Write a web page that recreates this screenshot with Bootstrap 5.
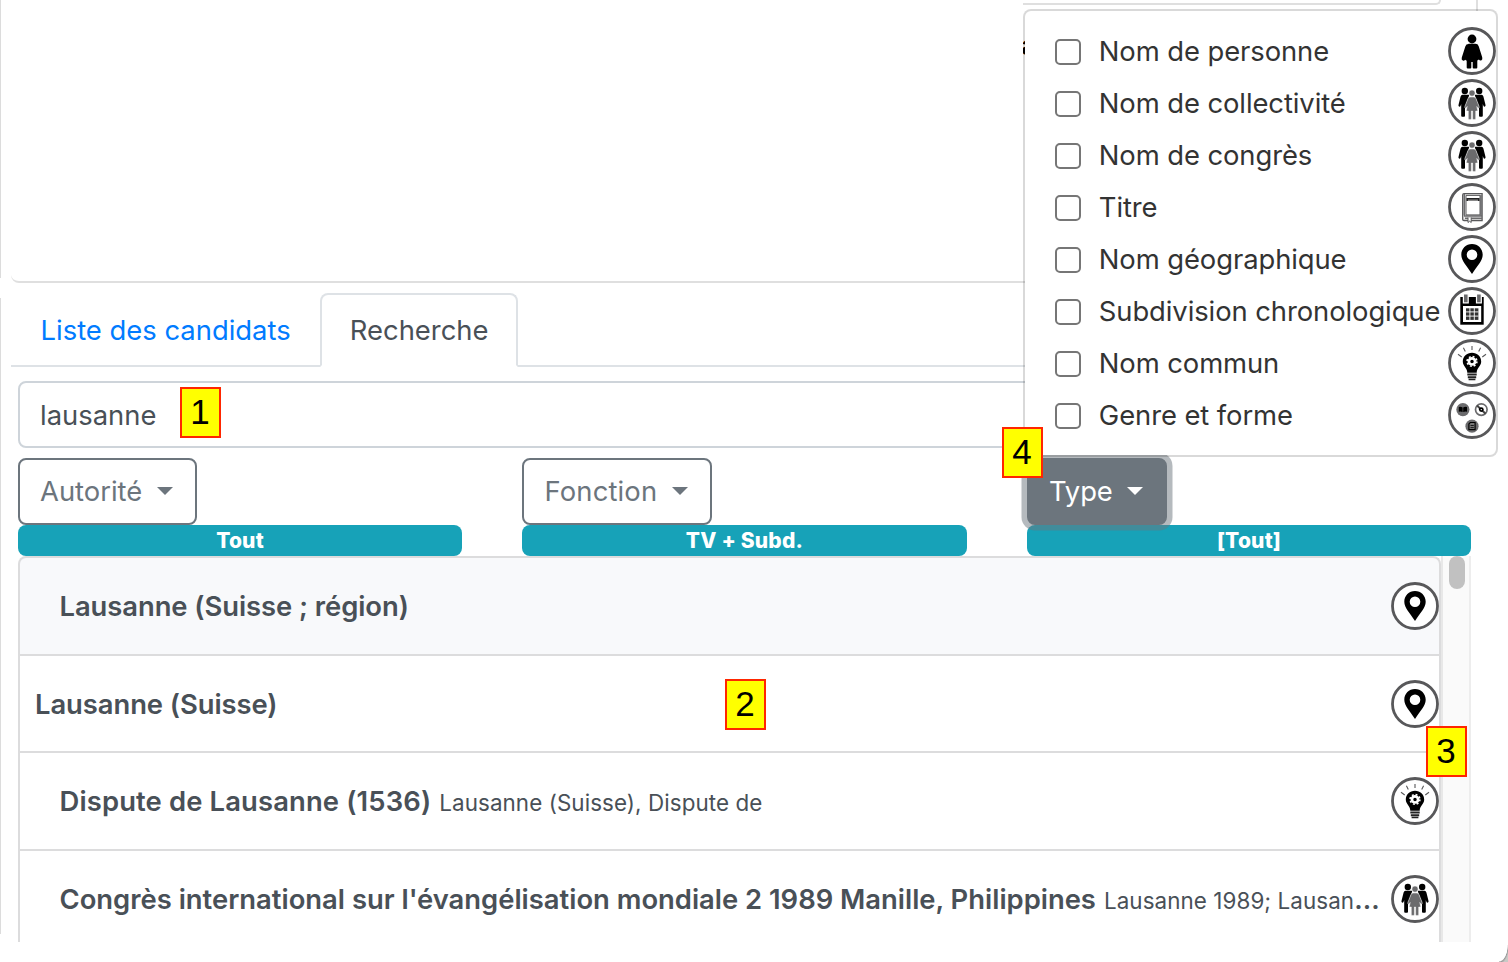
<!DOCTYPE html>
<html lang="fr">
<head>
<meta charset="utf-8">
<title>Recherche d'autorités</title>
<link href="https://cdn.jsdelivr.net/npm/bootstrap@5.3.0/dist/css/bootstrap.min.css" rel="stylesheet">
<style>
body{font-family:Inter,"Liberation Sans",sans-serif;font-size:27.4px;line-height:42px;color:#495057;background:#fff;width:1508px;height:962px;overflow:hidden;position:relative}
.upper{height:283px;margin-left:11px;width:1467px;border-bottom:2px solid #dfdfdf;border-bottom-left-radius:8px;position:relative}
.upper-right{width:455px;height:283px;border-right:2px solid #dfdfdf}
.upper-field{width:418px;height:5px;border:2px solid #dfdfdf;border-top:0;border-left:0;border-bottom-right-radius:8px}
.cut-label{width:2px;height:30px;overflow:hidden;margin-top:25px;color:#000;line-height:30px;text-indent:-2px;font-weight:600}
.edge{position:absolute;left:0;width:1px;background:#dcdcdc}
.main-tabs{margin:10px 0 0 11px;width:1460px;height:74px;border-bottom:2px solid #dee2e6;--bs-nav-tabs-border-width:2px;--bs-nav-tabs-border-radius:8px;--bs-nav-link-color:#007bff;--bs-nav-tabs-link-active-color:#495057;--bs-nav-link-padding-x:27.6px;--bs-nav-link-padding-y:14px}
.main-tabs .nav-link{height:74px;line-height:42px;white-space:nowrap}
.work{margin-left:18px;width:1453px}
.search{height:67px;margin-top:14px;border:2px solid #ced4da;border-radius:8px;padding:0 20px;color:#495057}
.filters{display:grid;grid-template-columns:444px 445px 444px;column-gap:60px;margin-top:10px}
.filters .btn{display:inline-flex;align-items:center;height:67px;border:2px solid #6c757d;border-radius:8px;font-size:27.4px;padding:0 22px 0 20px;color:#6c757d}
.filters .btn.wide{letter-spacing:.15px;padding-left:20.5px}
.filters .btn::after{margin-left:14.5px;border-top-width:8.5px;border-left-width:8px;border-right-width:8px;margin-top:-1px}
.filters .btn.type-on{background:#6c757d;color:#fff;letter-spacing:-.1px;box-shadow:0 0 0 5.5px rgba(108,117,125,.5);position:relative;z-index:2}
.filters .badge{display:block;height:31px;border-radius:8px;background:#17a2b8;font-size:21px;line-height:31px;padding:0;font-weight:800;letter-spacing:.2px}
.results{height:386px;overflow:hidden}
.results .list-group{width:1423px;flex:none;--bs-list-group-border-width:2px;--bs-list-group-border-color:#dcdcdd;--bs-list-group-border-radius:8px;--bs-list-group-color:#495057}
.results .list-group-item{height:97.6px;flex:none;padding:0 0 0 39.5px;display:flex;align-items:center;border-bottom-width:0}
.results .list-group-item:first-child{background:#f8f9fb;height:98px}
.results .list-group-item.top-hit{height:97px}
.results .list-group-item:nth-child(3){height:98px}
.results .list-group-item + .list-group-item{border-top-width:2px}
.results .list-group-item.top-hit{padding-left:15px}
.results .list-group-item:last-child{border-radius:0}
.term{font-weight:600;white-space:nowrap;flex:none}
.term.snug{letter-spacing:-.06px}
.term.loose{letter-spacing:.14px}
.alt{font-size:22.4px;white-space:nowrap;margin-left:8px;padding-top:4px;letter-spacing:.08px}
.dots{font-size:26.5px;font-weight:600;line-height:1}
.ico{width:48px;height:48px;flex:none;display:block}
.results .ico{margin-left:auto}
.track{width:30px;border-left:2px solid #e8e8e8;border-right:2px solid #ededed;background:#fafafa;padding:0 6px}
.thumb{width:16px;height:33px;border-radius:8px;background:#c1c1c1}
.type-menu{display:block;left:1023px;top:9px;width:475px;height:448px;border:2px solid rgba(0,0,0,.15);border-radius:8px;padding:14px 0;background:#fff;background-clip:padding-box;z-index:5;font-size:27.4px}
.type-menu .opt{height:52px;display:flex;align-items:center;padding-left:30px;color:#333}
.type-menu .opt span{white-space:nowrap;margin-left:-.2px;letter-spacing:-.08px}
.type-menu .form-check-input{width:26px;height:26px;margin:2px 18px 0 0;border:2px solid #767676;border-radius:5px;flex:none}
.type-menu .ico{margin-left:auto}
.marker{position:absolute;z-index:9;width:41px;height:51px;border:2px solid #ff2600;background:#ff0;color:#000;font:35px/46px "Liberation Sans",sans-serif;text-align:center;text-indent:-1px}
.win-corner{position:absolute;right:0;bottom:0;width:9px;height:17px;background:radial-gradient(ellipse at 0 0,#fff 0 66%,#9a9a9a 71%,#c9c9c6 80%)}
</style>
</head>
<body>
<svg class="d-none" xmlns="http://www.w3.org/2000/svg">
 <symbol id="person" viewBox="0 0 48 48"><circle cx="24" cy="24" r="22.500" fill="#fff" stroke="#58585a" stroke-width="2.800"/><circle cx="24" cy="12" r="4.400"/><path d="M20.500 16.800h7q2.400 0 3.200 2.400l3.500 11q.7 2.400-1 3.200-1.500.5-2.300-.9l-1.600 1V40.500q0 1-1 1h-2.600q-1 0-1-1V35h-1.400v5.500q0 1-1 1h-2.600q-1 0-1-1v-6.800l-1.600-1q-.8 1.400-2.300.9-1.700-.8-1-3.200l3.500-11q.8-2.400 3.200-2.400z"/></symbol>
 <symbol id="group" viewBox="0 0 48 48"><circle cx="24" cy="24" r="22.500" fill="#fff" stroke="#58585a" stroke-width="2.800"/><circle cx="16.800" cy="12" r="3.200"/><circle cx="31.200" cy="12" r="3.200"/><path d="M14.500 15.800h6.700l-.5 2-3.700 10v9q0 .9-.9.900h-2q-.9 0-.9-.9V25l-.7 2q-.6 1-1.500.6-.9-.4-.4-2l2-8q.5-1.800 1.900-1.800zM33.500 15.800h-6.700l.5 2 3.700 10v9q0 .9.900.900h2q.9 0 .9-.9V25l.7 2q.6 1 1.500.6.9-.4.4-2l-2-8q-.5-1.800-1.900-1.800z"/><g fill="#6b6b6d" stroke="#fff" stroke-width=".5"><circle cx="24" cy="14.100" r="3.100"/><path d="M22 18h4q1.500 0 2 1.500l3.100 7.800q.5 1.400-.5 1.800-.8.200-1.300-.8l-.5-.8 1 4.500h-2.100v7.500q0 .9-.8.900h-1.500q-.8 0-.8-.9V32h-1.200v7.500q0 .9-.8.900h-1.500q-.8 0-.8-.9V32h-2.100l1-4.500-.5.800q-.5 1-1.300.8-1-.4-.5-1.800l3.100-7.800q.5-1.500 2-1.500z"/></g></symbol>
 <symbol id="book" viewBox="0 0 48 48"><circle cx="24" cy="24" r="22.500" fill="#fff" stroke="#58585a" stroke-width="2.800"/><path d="M16 10.600h18.100v26.900H16q-1.300 0-1.300-1.300V12q0-1.400 1.300-1.400z" fill="#eee" stroke="#58585a" stroke-width="1.300"/><path d="M16.300 11v21.500M33 12v20.500M16 32.900h18M17 35.200h17" stroke="#6b6b6d" stroke-width="1.500"/><path d="M18 12.400h14v19.500H18z" fill="#fff" stroke="#58585a"/><path d="M19.200 18v-2.200h11.600v2.200" fill="#888" stroke="#222" stroke-width="1.500"/><path d="M20 34.500v5l1.600-1.300 1.600 1.300v-5" fill="#fff" stroke="#58585a"/></symbol>
 <symbol id="pin" viewBox="0 0 48 48"><circle cx="24" cy="24" r="22.500" fill="#fff" stroke="#58585a" stroke-width="2.800"/><path fill-rule="evenodd" d="M24 9c6 0 10.700 4.700 10.700 10.700 0 6.300-5.700 11.300-10.700 19.300-5-8-10.700-13-10.700-19.300C13.300 13.700 18 9 24 9zm0 5.500a5.300 5.300 0 1 0 0 10.600 5.300 5.300 0 0 0 0-10.600z"/></symbol>
 <symbol id="calendar" viewBox="0 0 48 48"><circle cx="24" cy="24" r="22.500" fill="#fff" stroke="#58585a" stroke-width="2.800"/><path d="M12.300 10h23.400v27.700H12.300z"/><path d="M15 19h18.200v16H15z" fill="#fff"/><path d="M15.400 7h4.800v8.800h-4.800zM28.500 7h4.800v8.800h-4.800z" fill="#6b6b6d" stroke="#fff" stroke-width="1.200"/><path d="M18 21.300h12.400v11.600H18z" fill="#333"/><path d="M21.900 21v12M26.300 21v12M18 24.900h12.500M18 29.100h12.500" stroke="#fff" stroke-width=".9"/></symbol>
 <symbol id="bulb" viewBox="0 0 48 48"><circle cx="24" cy="24" r="22.500" fill="#fff" stroke="#58585a" stroke-width="2.800"/><path d="M24 7v4M15.400 8.800l1.900 3.700M32.600 8.800l-1.900 3.700M10 15.300l3.700 2.700M38 15.300L34.300 18" stroke="#58585a" stroke-width="1.100"/><path d="M24 13.700c5.200 0 9.200 3.700 9.200 8.700 0 5-4.400 5.900-4.500 11.400h-9.400c-.1-5.500-4.500-6.400-4.500-11.400 0-5 4-8.700 9.200-8.700z"/><path d="M19.300 34.400h9.400v2.200h-9.400zM19.800 37.300h8.400v1.900h-8.400zM20.600 39.800h6.800v1.500h-6.800z" fill="#222"/><circle cx="24" cy="22.400" r="3.100" fill="none" stroke="#fff" stroke-width="2.700"/><circle cx="24" cy="22.400" r="4.900" fill="none" stroke="#fff" stroke-width="1.600" stroke-dasharray="1.920 1.928"/></symbol>
 <symbol id="genre" viewBox="0 0 48 48"><circle cx="24" cy="24" r="22.500" fill="#fff" stroke="#58585a" stroke-width="2.800"/><circle cx="14.900" cy="18.600" r="6.600" fill="#6b6b6d"/><path d="M10.800 16q2.200-.5 3.800.4V21q-1.600-.7-3.800-.3zM19 16q-2.200-.5-3.800.4V21q1.600-.7 3.800-.3z"/><circle cx="33.300" cy="18.600" r="5.800" fill="#fff" stroke="#6b6b6d" stroke-width="1.700"/><path d="M29 14.500l8.600 8.200" stroke="#444" stroke-width="2"/><circle cx="33.300" cy="18.600" r="2.400"/><circle cx="33.300" cy="18.600" r=".7" fill="#fff"/><circle cx="24" cy="35.200" r="6.600" fill="#6b6b6d"/><path d="M22.300 31.500h4.800v7.200h-6.200v-5.800z" fill="#777" stroke="#000" stroke-width="1.200"/><path d="M22.500 34.500h3.300M22.500 36.600h3.300" stroke="#000" stroke-width=".8"/></symbol>
</svg>

<div class="edge" style="top:0;height:278px"></div>
<div class="edge" style="top:298px;height:636px"></div>

<section class="upper d-flex justify-content-end">
 <div class="upper-right"><div class="upper-field"></div><div class="cut-label">a</div></div>
</section>

<ul class="nav nav-tabs main-tabs flex-nowrap">
 <li class="nav-item"><a class="nav-link" href="#">Liste des candidats</a></li>
 <li class="nav-item"><a class="nav-link active" href="#">Recherche</a></li>
</ul>

<main class="work">
 <div class="search d-flex align-items-center">lausanne</div>
 <div class="filters">
  <div><button class="btn dropdown-toggle" type="button">Autorité</button><span class="badge">Tout</span></div>
  <div><button class="btn dropdown-toggle wide" type="button">Fonction</button><span class="badge">TV + Subd.</span></div>
  <div><button class="btn dropdown-toggle type-on" type="button">Type</button><span class="badge">[Tout]</span></div>
 </div>
 <div class="results d-flex">
  <div class="list-group">
   <div class="list-group-item"><span class="term snug">Lausanne (Suisse ; région)</span><svg class="ico"><use href="#pin"/></svg></div>
   <div class="list-group-item top-hit"><span class="term snug">Lausanne (Suisse)</span><svg class="ico"><use href="#pin"/></svg></div>
   <div class="list-group-item"><span class="term loose">Dispute de Lausanne (1536)</span><span class="alt">Lausanne (Suisse), Dispute de</span><svg class="ico"><use href="#bulb"/></svg></div>
   <div class="list-group-item"><span class="term">Congrès international sur l'évangélisation mondiale 2 1989 Manille, Philippines</span><span class="alt">Lausanne 1989; Lausan<span class="dots">...</span></span><svg class="ico"><use href="#group"/></svg></div>
  </div>
  <div class="track"><div class="thumb"></div></div>
 </div>
</main>

<div class="dropdown-menu type-menu">
 <label class="opt"><input class="form-check-input" type="checkbox"><span>Nom de personne</span><svg class="ico"><use href="#person"/></svg></label>
 <label class="opt"><input class="form-check-input" type="checkbox"><span>Nom de collectivité</span><svg class="ico"><use href="#group"/></svg></label>
 <label class="opt"><input class="form-check-input" type="checkbox"><span>Nom de congrès</span><svg class="ico"><use href="#group"/></svg></label>
 <label class="opt"><input class="form-check-input" type="checkbox"><span>Titre</span><svg class="ico"><use href="#book"/></svg></label>
 <label class="opt"><input class="form-check-input" type="checkbox"><span>Nom géographique</span><svg class="ico"><use href="#pin"/></svg></label>
 <label class="opt"><input class="form-check-input" type="checkbox"><span>Subdivision chronologique</span><svg class="ico"><use href="#calendar"/></svg></label>
 <label class="opt"><input class="form-check-input" type="checkbox"><span>Nom commun</span><svg class="ico"><use href="#bulb"/></svg></label>
 <label class="opt"><input class="form-check-input" type="checkbox"><span>Genre et forme</span><svg class="ico"><use href="#genre"/></svg></label>
</div>

<div class="marker" style="left:180px;top:387px">1</div>
<div class="marker" style="left:725px;top:679px">2</div>
<div class="marker" style="left:1426px;top:726px">3</div>
<div class="marker" style="left:1002px;top:427px">4</div>
<div class="win-corner"></div>
<script src="https://cdn.jsdelivr.net/npm/bootstrap@5.3.0/dist/js/bootstrap.bundle.min.js"></script>
</body>
</html>
